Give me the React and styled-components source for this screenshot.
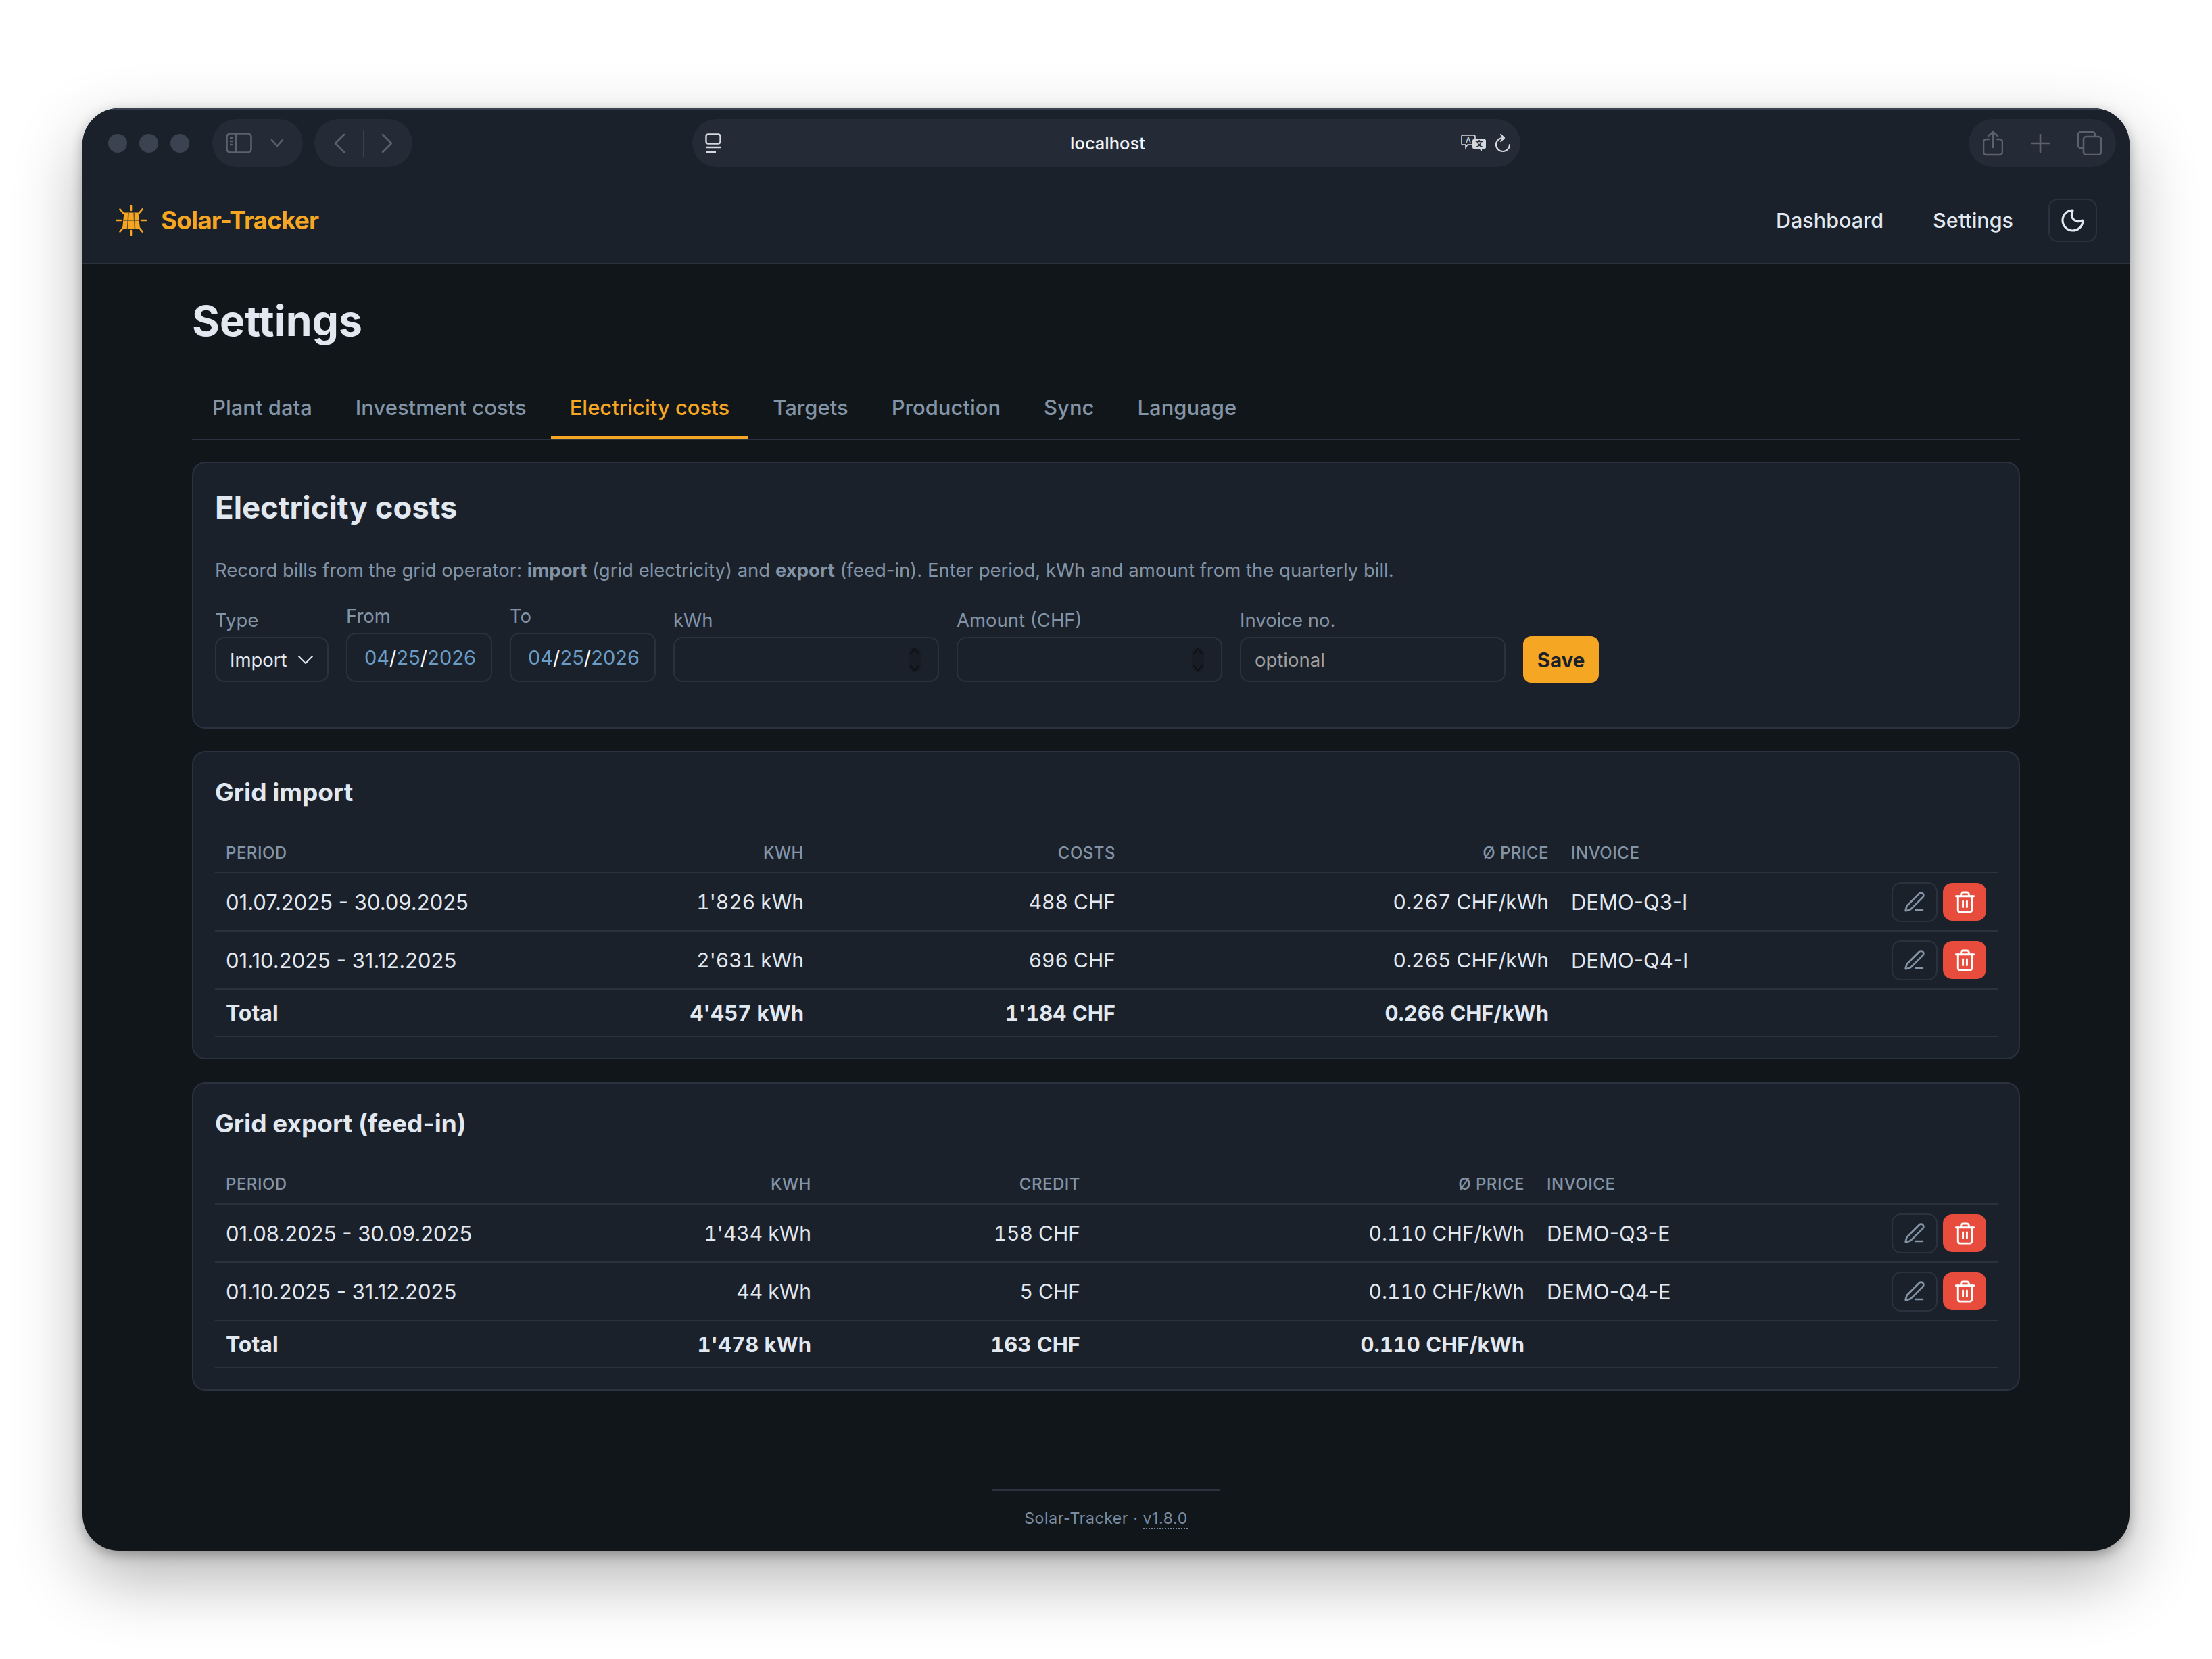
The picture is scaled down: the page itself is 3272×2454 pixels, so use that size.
import React from 'react'
import styled, { createGlobalStyle } from 'styled-components'
import { Moon, PenLine, Trash2 } from 'lucide-react'

const GlobalStyle = createGlobalStyle`
  html, body {
    margin: 0;
    padding: 0;
    background: #ffffff;
    font-family: "Inter", "Liberation Sans", sans-serif;
  }
  * { box-sizing: border-box; }
`

const Page = styled.div`
  width: 3272px;
  height: 2454px;
  padding: 160px 122px;
  overflow: hidden;
`

const Window = styled.div`
  width: 3028px;
  height: 2134px;
  border-radius: 54px;
  overflow: hidden;
  background: #10161a;
  box-shadow: 0 40px 100px rgba(0, 0, 0, 0.3), 0 6px 18px rgba(0, 0, 0, 0.28);
  display: flex;
  flex-direction: column;
`

const TopBar = styled.header`
  background: #1a212b;
  border-top: 2px solid #3a4250;
  border-bottom: 2px solid #2a3240;
`

const BrowserBar = styled.div`
  display: grid;
  grid-template-columns: 1fr 1225px 1fr;
  align-items: center;
  height: 100px;
  padding: 14px 38px 15px 38px;
`

const BarSide = styled.div`
  display: flex;
  align-items: center;
  justify-content: ${p => (p.$end ? 'flex-end' : 'flex-start')};
  margin-right: ${p => (p.$end ? -18 : 0)}px;
`

const Dots = styled.div`
  display: flex;
  gap: 18px;
  margin-right: 34px;
`

const Dot = styled.span`
  width: 28px;
  height: 28px;
  border-radius: 50%;
  background: #3c4350;
`

const Pill = styled.div`
  display: flex;
  align-items: center;
  height: 71px;
  border-radius: 36px;
  background: #242a36;
  width: ${p => p.$w}px;
  margin-right: ${p => p.$mr || 0}px;
  padding: 0 ${p => p.$pr || p.$pad || 0}px 0 ${p => p.$pad || 0}px;
  justify-content: space-between;
  color: #5b626e;
`

const NavDivider = styled.span`
  width: 2px;
  height: 40px;
  background: #3a404c;
`

const UrlBar = styled.div`
  display: flex;
  align-items: center;
  height: 71px;
  border-radius: 36px;
  background: #242a36;
  padding: 0 14px 0 19px;
  color: #e2e8f0;
`

const UrlSide = styled.div`
  flex: 1;
  display: flex;
  align-items: center;
  gap: 12px;
  justify-content: ${p => (p.$end ? 'flex-end' : 'flex-start')};
`

const UrlText = styled.span`
  font-size: 25.5px;
  font-weight: 500;
  color: #f1f5f9;
`

const NavBar = styled.div`
  display: flex;
  align-items: center;
  justify-content: space-between;
  height: 127px;
  padding: 0 48px 0 49px;
`

const Brand = styled.div`
  display: flex;
  align-items: center;
  gap: 21px;
  color: #f5a623;
  font-size: 37px;
  font-weight: 700;
  letter-spacing: -0.9px;
`

const NavLinks = styled.nav`
  display: flex;
  align-items: center;
`

const NavLink = styled.a`
  color: #e2e8f0;
  font-size: 30.5px;
  font-weight: 500;
  margin-right: ${p => p.$mr}px;
`

const ThemeButton = styled.button`
  width: 72px;
  height: 64px;
  border: 2px solid #2a3240;
  border-radius: 14px;
  background: transparent;
  color: #e2e8f0;
  display: flex;
  align-items: center;
  justify-content: center;
  padding: 0;
`

const Main = styled.main`
  flex: 1;
  padding: 45px 162px 0;
  display: flex;
  flex-direction: column;
`

const Title = styled.h1`
  margin: 0;
  font-size: 62.5px;
  line-height: 77px;
  font-weight: 700;
  color: #e2e8f0;
`

const Tabs = styled.div`
  display: flex;
  gap: 8px;
  margin-top: 44px;
  padding-left: 2px;
  border-bottom: 2px solid #2a3240;
`

const Tab = styled.a`
  padding: 26px 28px 22px;
  font-size: 31px;
  line-height: 40px;
  font-weight: 500;
  color: ${p => (p.$active ? '#f5a623' : '#8494a7')};
  border-bottom: 4px solid ${p => (p.$active ? '#f5a623' : 'transparent')};
`

const Panel = styled.section`
  background: #1a212b;
  border: 2px solid #2a3240;
  border-radius: 20px;
  margin-top: ${p => p.$mt}px;
  padding: ${p => p.$pt}px 31px ${p => p.$pb}px 32px;
`

const PanelTitle = styled.h2`
  margin: 0;
  font-size: 45.5px;
  line-height: 56px;
  font-weight: 700;
  color: #e2e8f0;
`

const SubTitle = styled.h3`
  margin: 0;
  font-size: 37px;
  line-height: 46px;
  font-weight: 700;
  color: #e2e8f0;
`

const Intro = styled.p`
  margin: 44px 0 0;
  font-size: 27.5px;
  line-height: 40px;
  color: #8494a7;

  strong {
    font-weight: 700;
  }
`

const Form = styled.form`
  display: flex;
  align-items: flex-end;
  gap: 26px;
  margin-top: 31px;
`

const Field = styled.label`
  display: flex;
  flex-direction: column;
  gap: 8px;
  width: ${p => p.$w}px;
`

const FieldLabel = styled.span`
  font-size: 27.5px;
  line-height: 34px;
  color: #8494a7;
`

const Control = styled.div`
  display: flex;
  align-items: center;
  justify-content: space-between;
  height: ${p => p.$h || 67}px;
  padding: 0 ${p => p.$pr || 20}px 0 ${p => p.$pl || 20}px;
  border: 2px solid #2a3240;
  border-radius: 14px;
  background: #1a212b;
  font-size: 27.5px;
  color: #e2e8f0;
`

const TextInput = styled.input`
  width: 100%;
  height: 67px;
  padding: 0 20px;
  border: 2px solid #2a3240;
  border-radius: 14px;
  background: #1a212b;
  font-family: inherit;
  font-size: 27.5px;
  color: #e2e8f0;
  outline: none;

  &::placeholder {
    color: #a0a0a0;
  }
`

const DateText = styled.span`
  color: #ffffff;
  font-size: 29px;

  b {
    font-weight: 400;
    color: #6a9cc4;
  }
`

const SpinBox = styled.span`
  display: flex;
  color: #0d1014;
  background: #171c25;
  border-radius: 10px;
`

const SaveButton = styled.button`
  width: 112px;
  height: 69px;
  border: none;
  border-radius: 12px;
  background: #f5a623;
  color: #1a212b;
  font-family: inherit;
  font-size: 29.5px;
  font-weight: 700;
  padding: 0;
  margin-bottom: -1px;
`

const Table = styled.table`
  width: 100%;
  border-collapse: collapse;
  table-layout: fixed;
  margin-top: 37px;
`

const Col = styled.col`
  width: ${p => p.$w}px;
`

const Th = styled.th`
  height: 59px;
  padding: 0 ${p => (p.$right ? 19 : 17)}px 0 16px;
  text-align: ${p => (p.$right ? 'right' : 'left')};
  font-size: 24px;
  font-weight: 500;
  letter-spacing: 0.5px;
  text-transform: uppercase;
  color: #8494a7;
  border-bottom: 2px solid #2a3240;

  &:nth-child(5) {
    padding-left: 14px;
  }
`

const Td = styled.td`
  height: ${p => (p.$total ? 70 : 86)}px;
  padding: 0 ${p => (p.$right ? 19 : 17)}px 0 16px;
  text-align: ${p => (p.$right ? 'right' : 'left')};
  font-size: ${p => (p.$total ? (p.$right ? 31 : 32) : p.$right ? 30 : 31)}px;
  font-variant-numeric: ${p => (p.$right ? 'tabular-nums' : 'normal')};
  font-weight: ${p => (p.$total ? 700 : 400)};
  color: #e2e8f0;
  border-bottom: 2px solid #2a3240;

  &:nth-child(5) {
    padding-left: 14px;
  }
`

const Actions = styled.div`
  display: flex;
  align-items: center;
  justify-content: flex-end;
  gap: 8px;
`

const EditButton = styled.button`
  width: 68px;
  height: 59px;
  border: 2px solid #2a3240;
  border-radius: 14px;
  background: transparent;
  color: #8494a7;
  display: flex;
  align-items: center;
  justify-content: center;
  padding: 0;
`

const DeleteButton = styled.button`
  width: 64px;
  height: 56px;
  border: none;
  border-radius: 14px;
  background: #e74c3c;
  color: #ffffff;
  display: flex;
  align-items: center;
  justify-content: center;
  padding: 0;
`

const Footer = styled.footer`
  width: 336px;
  margin: 146px auto 0;
  padding-top: 26px;
  border-top: 2px solid #2a3240;
  text-align: center;
  font-size: 23px;
  line-height: 30px;
  letter-spacing: 0.6px;
  color: #7b8ca1;
`

const Version = styled.span`
  border-bottom: 2px dotted #7b8ca1;
`

const Chevron = ({ d, w, h, vb, sw = 2.6 }) => (
  <svg width={w} height={h} viewBox={vb} fill="none" stroke="currentColor" strokeWidth={sw} strokeLinecap="round" strokeLinejoin="round">
    <path d={d} />
  </svg>
)

const SolarLogo = () => (
  <svg width="46" height="46" viewBox="0 0 46 46" fill="none">
    <g stroke="#f5a623" strokeWidth="2.6" strokeLinecap="round">
      <path d="M23 1v7M23 38v7M1 23h7M38 23h7M6.5 6.5l5 6M39.5 6.5l-5 6M6.5 39.5l5-6M39.5 39.5l-5-6" />
    </g>
    <path d="M12.5 11.5h21L36 35H10z" fill="#f5a623" />
    <path d="M11.5 23h23M19 11.5L17.5 35M27 11.5L28.5 35" stroke="#6b5426" strokeWidth="1.6" />
  </svg>
)

const SidebarIcon = () => (
  <svg width="39" height="31" viewBox="0 0 39 31" fill="none" stroke="currentColor" strokeWidth="2.6">
    <rect x="1.5" y="1.5" width="36" height="28" rx="5" />
    <path d="M15 2v27M6 8h4M6 13h4M6 18h4" />
  </svg>
)

const SiteIcon = () => (
  <svg width="24" height="30" viewBox="0 0 24 30" fill="none" stroke="#d5d9df" strokeWidth="2.4">
    <rect x="1.5" y="1.5" width="21" height="14" rx="3" />
    <path d="M1 21h22M1 28h15" />
  </svg>
)

const TranslateIcon = () => (
  <svg width="38" height="26" viewBox="0 0 38 26" fill="none">
    <path d="M3 1h16a2 2 0 0 1 2 2v10a2 2 0 0 1-2 2H10l-3 4v-4H3a2 2 0 0 1-2-2V3a2 2 0 0 1 2-2z" stroke="#d5d9df" strokeWidth="1.6" />
    <text x="11" y="12" fontSize="11" fontFamily="Inter, sans-serif" fontWeight="500" textAnchor="middle" fill="#d5d9df">A</text>
    <path d="M19 7h16a2 2 0 0 1 2 2v10a2 2 0 0 1-2 2h-4v4l-4-4h-8a2 2 0 0 1-2-2V9a2 2 0 0 1 2-2z" fill="#d5d9df" />
    <text x="27" y="18" fontSize="11" fontFamily="Noto Sans CJK SC, sans-serif" fontWeight="700" textAnchor="middle" fill="#242a36">文</text>
  </svg>
)

const ReloadIcon = () => (
  <svg width="24" height="28" viewBox="0 0 24 28" fill="none" stroke="#d5d9df" strokeWidth="2.2" strokeLinecap="round" strokeLinejoin="round">
    <path d="M12 6a10 10 0 1 0 10 10" />
    <path d="M9 1l5 5-5 5" />
  </svg>
)

const ShareIcon = () => (
  <svg width="30" height="38" viewBox="0 0 30 38" fill="none" stroke="currentColor" strokeWidth="2.6" strokeLinecap="round" strokeLinejoin="round">
    <path d="M9 13H5a4 4 0 0 0-4 4v15a4 4 0 0 0 4 4h20a4 4 0 0 0 4-4V17a4 4 0 0 0-4-4h-4" />
    <path d="M15 25V2M8 8l7-6 7 6" />
  </svg>
)

const PlusIcon = () => (
  <svg width="28" height="28" viewBox="0 0 28 28" fill="none" stroke="currentColor" strokeWidth="2.6" strokeLinecap="round">
    <path d="M14 1v26M1 14h26" />
  </svg>
)

const TabsIcon = () => (
  <svg width="36" height="36" viewBox="0 0 36 36" fill="none" stroke="currentColor" strokeWidth="2.6" strokeLinejoin="round">
    <path d="M8 25H5a4 4 0 0 1-4-4V5a4 4 0 0 1 4-4h17a4 4 0 0 1 4 4v3" />
    <rect x="9" y="8" width="26" height="27" rx="4" />
  </svg>
)

const Spinner = () => (
  <SpinBox>
    <svg width="18" height="36" viewBox="0 0 18 36" fill="none" stroke="currentColor" strokeWidth="2" strokeLinecap="round" strokeLinejoin="round">
      <path d="M3 9l6-7 6 7M3 27l6 7 6-7" />
    </svg>
  </SpinBox>
)

const DateValue = () => (
  <DateText><b>04</b>/<b>25</b>/<b>2026</b></DateText>
)

const tabs = ['Plant data', 'Investment costs', 'Electricity costs', 'Targets', 'Production', 'Sync', 'Language']

const importData = {
  title: 'Grid import',
  cols: [473, 417, 461, 641, 380, 265],
  head: ['Period', 'kWh', 'Costs', 'Ø Price', 'Invoice'],
  rows: [
    ['01.07.2025 - 30.09.2025', "1'826 kWh", '488 CHF', '0.267 CHF/kWh', 'DEMO-Q3-I'],
    ['01.10.2025 - 31.12.2025', "2'631 kWh", '696 CHF', '0.265 CHF/kWh', 'DEMO-Q4-I'],
  ],
  total: ['Total', "4'457 kWh", "1'184 CHF", '0.266 CHF/kWh'],
}

const exportData = {
  title: 'Grid export (feed-in)',
  cols: [484, 417, 398, 657, 416, 265],
  head: ['Period', 'kWh', 'Credit', 'Ø Price', 'Invoice'],
  rows: [
    ['01.08.2025 - 30.09.2025', "1'434 kWh", '158 CHF', '0.110 CHF/kWh', 'DEMO-Q3-E'],
    ['01.10.2025 - 31.12.2025', '44 kWh', '5 CHF', '0.110 CHF/kWh', 'DEMO-Q4-E'],
  ],
  total: ['Total', "1'478 kWh", '163 CHF', '0.110 CHF/kWh'],
}

function BillTable({ data, mt }) {
  const isRight = i => i >= 1 && i <= 3
  return (
    <Panel $mt={mt} $pt={36} $pb={31}>
      <SubTitle>{data.title}</SubTitle>
      <Table>
        <colgroup>
          {data.cols.map((w, i) => <Col key={i} $w={w} />)}
        </colgroup>
        <thead>
          <tr>
            {data.head.map((h, i) => <Th key={h} $right={isRight(i)}>{h}</Th>)}
            <Th />
          </tr>
        </thead>
        <tbody>
          {data.rows.map(row => (
            <tr key={row[0]}>
              {row.map((cell, i) => <Td key={i} $right={isRight(i)}>{cell}</Td>)}
              <Td>
                <Actions>
                  <EditButton><PenLine size={32} strokeWidth={2} /></EditButton>
                  <DeleteButton><Trash2 size={35} strokeWidth={2} /></DeleteButton>
                </Actions>
              </Td>
            </tr>
          ))}
          <tr>
            {data.total.map((cell, i) => <Td key={i} $total $right={isRight(i)}>{cell}</Td>)}
            <Td $total />
            <Td $total />
          </tr>
        </tbody>
      </Table>
    </Panel>
  )
}

export default function App() {
  return (
    <Page>
      <GlobalStyle />
      <Window>
        <TopBar>
          <BrowserBar>
            <BarSide>
              <Dots><Dot /><Dot /><Dot /></Dots>
              <Pill $w={134} $mr={17} $pad={20} $pr={28}>
                <SidebarIcon />
                <Chevron w={20} h={13} vb="0 0 20 13" d="M2 2l8 9 8-9" />
              </Pill>
              <Pill $w={145} $pad={28}>
                <Chevron w={18} h={30} vb="0 0 18 30" d="M16 2L3 15l13 13" />
                <NavDivider />
                <Chevron w={18} h={30} vb="0 0 18 30" d="M2 2l13 13L2 28" />
              </Pill>
            </BarSide>
            <UrlBar>
              <UrlSide><SiteIcon /></UrlSide>
              <UrlText>localhost</UrlText>
              <UrlSide $end><TranslateIcon /><ReloadIcon /></UrlSide>
            </UrlBar>
            <BarSide $end>
              <Pill $w={218} $pad={21}>
                <ShareIcon />
                <PlusIcon />
                <TabsIcon />
              </Pill>
            </BarSide>
          </BrowserBar>
          <NavBar>
            <Brand><SolarLogo />Solar-Tracker</Brand>
            <NavLinks>
              <NavLink $mr={73}>Dashboard</NavLink>
              <NavLink $mr={52}>Settings</NavLink>
              <ThemeButton><Moon size={40} strokeWidth={1.9} /></ThemeButton>
            </NavLinks>
          </NavBar>
        </TopBar>
        <Main>
          <Title>Settings</Title>
          <Tabs>
            {tabs.map(t => <Tab key={t} $active={t === 'Electricity costs'}>{t}</Tab>)}
          </Tabs>
          <Panel $mt={32} $pt={38} $pb={67}>
            <PanelTitle>Electricity costs</PanelTitle>
            <Intro>
              Record bills from the grid operator: <strong>import</strong> (grid electricity) and <strong>export</strong> (feed-in). Enter period, kWh and amount from the quarterly bill.
            </Intro>
            <Form>
              <Field $w={168}>
                <FieldLabel>Type</FieldLabel>
                <Control>
                  Import
                  <Chevron w={24} h={14} vb="0 0 24 14" sw={2} d="M2 2l10 10L22 2" />
                </Control>
              </Field>
              <Field $w={216}>
                <FieldLabel>From</FieldLabel>
                <Control $h={73} $pl={25} $pr={24}><DateValue /></Control>
              </Field>
              <Field $w={216}>
                <FieldLabel>To</FieldLabel>
                <Control $h={73} $pl={25} $pr={24}><DateValue /></Control>
              </Field>
              <Field $w={393}>
                <FieldLabel>kWh</FieldLabel>
                <Control $pr={25}><span /><Spinner /></Control>
              </Field>
              <Field $w={393}>
                <FieldLabel>Amount (CHF)</FieldLabel>
                <Control $pr={25}><span /><Spinner /></Control>
              </Field>
              <Field $w={393}>
                <FieldLabel>Invoice no.</FieldLabel>
                <TextInput placeholder="optional" />
              </Field>
              <SaveButton type="button">Save</SaveButton>
            </Form>
          </Panel>
          <BillTable data={importData} mt={33} />
          <BillTable data={exportData} mt={34} />
          <Footer>
            Solar-Tracker · <Version>v1.8.0</Version>
          </Footer>
        </Main>
      </Window>
    </Page>
  )
}
